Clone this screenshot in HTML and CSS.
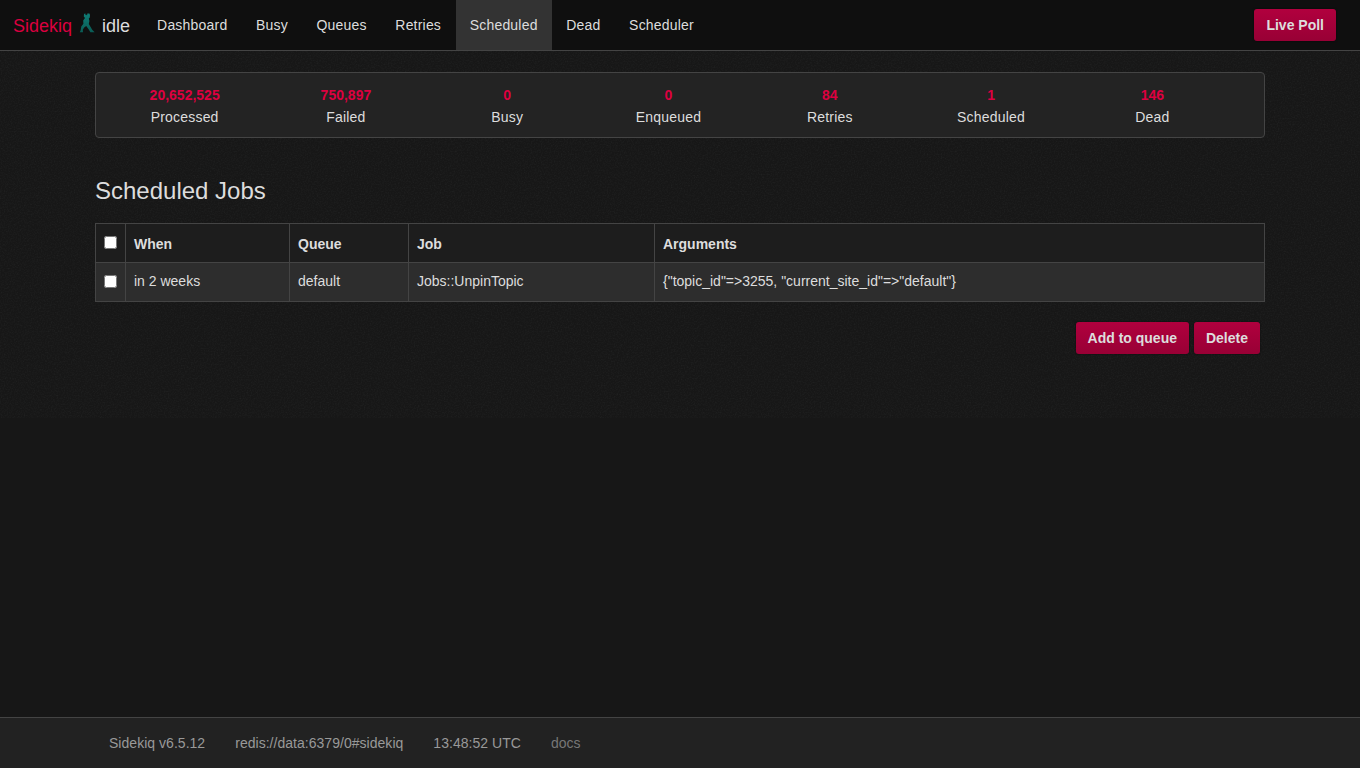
FILE: index.html
```
<!DOCTYPE html>
<html lang="en">
<head>
    <meta charset="UTF-8">
    <meta name="viewport" content="width=device-width, initial-scale=1.0">
    <title>Sidekiq</title>
    <link rel="stylesheet" href="styles.css">
</head>
<body>
    <header class="navbar">
        <a class="brand" href="#">Sidekiq</a>
        <svg class="logo" viewBox="0 0 16 20" width="16" height="20">
            <defs>
                <linearGradient id="kick" x1="0" y1="0" x2="0" y2="1">
                    <stop offset="0" stop-color="#0f7d76"/>
                    <stop offset="1" stop-color="#0a5c55"/>
                </linearGradient>
            </defs>
            <path fill="url(#kick)" d="M5 1.2 L6.2 0.2 L6.6 2.2 L7.2 1.4 L8 2.4 L8.4 0.4 L10.4 0.4 L11 2 L10.8 4.4 L9.8 5.4 L10.4 8 L9.8 11 L11.6 14 L13.2 16.8 L15.6 19.3 L11.4 19.3 L9.6 16.2 L7.2 13 L5.2 14.6 L3.8 16.8 L4 19.3 L0.8 19.3 L1.6 17.6 L2.3 13.4 L4.4 10.8 L4.2 7.6 L6 5 L4.8 3.4 Z"/>
        </svg>
        <span class="status">idle</span>
        <nav class="nav">
            <a href="#">Dashboard</a>
            <a href="#">Busy</a>
            <a href="#">Queues</a>
            <a href="#">Retries</a>
            <a class="active" href="#">Scheduled</a>
            <a href="#">Dead</a>
            <a href="#">Scheduler</a>
        </nav>
        <button class="btn live-poll">Live Poll</button>
    </header>

    <main class="container">
        <ul class="summary">
            <li><span class="count">20,652,525</span><span class="desc">Processed</span></li>
            <li><span class="count">750,897</span><span class="desc">Failed</span></li>
            <li><span class="count">0</span><span class="desc">Busy</span></li>
            <li><span class="count">0</span><span class="desc">Enqueued</span></li>
            <li><span class="count">84</span><span class="desc">Retries</span></li>
            <li><span class="count">1</span><span class="desc">Scheduled</span></li>
            <li><span class="count">146</span><span class="desc">Dead</span></li>
        </ul>

        <h3>Scheduled Jobs</h3>

        <table class="table">
            <colgroup>
                <col class="col-check"><col class="col-when"><col class="col-queue"><col class="col-job"><col>
            </colgroup>
            <thead>
                <tr>
                    <th><input type="checkbox"></th>
                    <th>When</th>
                    <th>Queue</th>
                    <th>Job</th>
                    <th>Arguments</th>
                </tr>
            </thead>
            <tbody>
                <tr>
                    <td><input type="checkbox"></td>
                    <td>in 2 weeks</td>
                    <td>default</td>
                    <td>Jobs::UnpinTopic</td>
                    <td>{"topic_id"=&gt;3255, "current_site_id"=&gt;"default"}</td>
                </tr>
            </tbody>
        </table>

        <div class="actions">
            <button class="btn">Add to queue</button>
            <button class="btn">Delete</button>
        </div>
    </main>

    <footer class="footer">
        <span>Sidekiq v6.5.12</span>
        <span>redis://data:6379/0#sidekiq</span>
        <span>13:48:52 UTC</span>
        <a href="#">docs</a>
    </footer>
</body>
</html>
```

FILE: styles.css
```
* {
    box-sizing: border-box;
}
body {
    display: flex;
    flex-direction: column;
    height: 100vh;
    margin: 0;
    overflow: hidden;
    color: #ddd;
    background-color: #171717;
    /* fine grain behind the upper part of the page */
    background-image: url("data:image/svg+xml,%3Csvg xmlns='http://www.w3.org/2000/svg' width='500' height='418'%3E%3Cfilter id='n'%3E%3CfeTurbulence type='fractalNoise' baseFrequency='.7' numOctaves='2' stitchTiles='stitch'/%3E%3CfeColorMatrix values='0 0 0 0 .3 0 0 0 0 .34 0 0 0 0 .34 1.2 0 0 0 -.55'/%3E%3C/filter%3E%3Crect width='500' height='418' filter='url(%23n)' opacity='.12'/%3E%3C/svg%3E");
    background-repeat: repeat-x;
    font: 14px/20px "Liberation Sans", Arial, sans-serif;
}
a {
    color: inherit;
    text-decoration: none;
}

/* top bar */
.navbar {
    display: flex;
    flex: none;
    align-items: center;
    height: 51px;
    padding: 0 24px 0 13px;
    background: #0f0f0f;
    border-bottom: 1px solid #444;
}
.brand,
.status {
    padding-top: 1px;
    font-size: 18px;
}
.brand {
    color: #d9003f;
}
.logo {
    margin: 0 7px 5px 7px;
}
.nav {
    display: flex;
    gap: 0.6px;
    margin-left: 13px;
    letter-spacing: 0.2px;
}
.nav a {
    height: 50px;
    padding: 15px 14px;
}
.nav .active {
    background: #333;
}
.btn {
    height: 32px;
    padding: 0 12px;
    border: none;
    border-radius: 3px;
    color: #ddd;
    background: linear-gradient(#b1003e, #980035);
    box-shadow: 0 0 2px rgba(0, 0, 0, .6);
    font: bold 14px/32px "Liberation Sans", Arial, sans-serif;
}
.live-poll {
    margin-left: auto;
}

.container {
    flex: 1;
    width: 1170px;
    margin: 0 auto;
}

/* counters */
.summary {
    display: flex;
    height: 66px;
    margin: 21px 0 0;
    padding: 11px 31px 0 8px;
    list-style: none;
    background: #232323;
    border: 1px solid #444;
    border-radius: 4px;
    text-align: center;
}
.summary li {
    flex: 1;
}
.summary span {
    display: block;
    line-height: 22px;
}
.count {
    color: #dd0040;
    font-weight: bold;
}
.desc {
    letter-spacing: 0.2px;
}

h3 {
    margin: 40px 0 19px;
    font-size: 24px;
    font-weight: normal;
    line-height: 26px;
}

/* jobs table */
.table {
    width: 100%;
    table-layout: fixed;
    border-collapse: collapse;
}
.col-check {
    width: 30px;
}
.col-when {
    width: 164px;
}
.col-queue {
    width: 119px;
}
.col-job {
    width: 246px;
}
.table th,
.table td {
    height: 39px;
    padding: 0 8px;
    border: 1px solid #444;
    text-align: left;
}
.table th {
    padding-top: 1px;
    background: #1d1d1d;
}
.table td {
    padding-bottom: 2px;
    background: #2d2d2d;
}
.table input {
    display: block;
    width: 13px;
    height: 13px;
    margin: 0;
}
.table th input {
    margin-top: -3px;
}

.actions {
    display: flex;
    justify-content: flex-end;
    gap: 5px;
    margin: 20px 5px 0 0;
}

.footer {
    display: flex;
    flex: none;
    gap: 30px;
    height: 51px;
    padding: 15px 109px;
    color: #999;
    background: #222;
    border-top: 1px solid #444;
    letter-spacing: 0.03px;
}
.footer a {
    color: #777;
}
```
